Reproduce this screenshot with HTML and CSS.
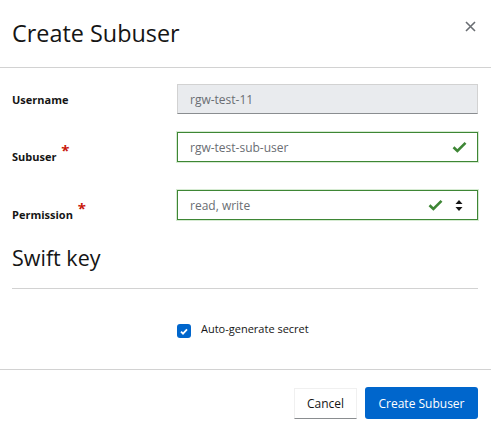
FILE: index.html
```html
<!DOCTYPE html>
<html>
<head>
<meta charset="utf-8">
<link rel="stylesheet" href="styles.css">
</head>
<body>
<div class="modal">
  <div class="modal-header">
    <h1 class="title">Create Subuser</h1>
    <button class="close" aria-label="Close">
      <svg width="11" height="11" viewBox="0 0 11 11"><path d="M1 1L10 10M10 1L1 10" stroke="#6a6e73" stroke-width="1.6"/></svg>
    </button>
  </div>
  <div class="modal-body">
    <div class="row row-user">
      <label class="label">Username</label>
      <div class="input disabled">rgw-test-11</div>
    </div>
    <div class="row row-sub">
      <label class="label">Subuser <span class="req">*</span></label>
      <div class="input valid"><span class="val">rgw-test-sub-user</span>
        <svg class="check" width="15" height="12" viewBox="0 0 15 12"><path d="M1.5 6.2L5.4 10L13.5 1.8" fill="none" stroke="#3e8635" stroke-width="2.6"/></svg>
      </div>
    </div>
    <div class="row row-perm">
      <label class="label">Permission <span class="req">*</span></label>
      <div class="input valid"><span class="val">read, write</span>
        <svg class="check" width="15" height="12" viewBox="0 0 15 12"><path d="M1.5 6.2L5.4 10L13.5 1.8" fill="none" stroke="#3e8635" stroke-width="2.6"/></svg>
        <svg class="caret" width="8" height="11" viewBox="0 0 8 11"><path d="M4 0L7.5 4H0.5Z M4 11L7.5 7H0.5Z" fill="#151515"/></svg>
      </div>
    </div>
    <h2 class="section">Swift key</h2>
    <div class="check-row">
      <span class="checkbox"><svg width="8" height="7" viewBox="0 0 8 7"><path d="M1 3.6L3 5.6L7 1.4" fill="none" stroke="#fff" stroke-width="1.8"/></svg></span>
      <span class="check-label">Auto-generate secret</span>
    </div>
  </div>
  <div class="modal-footer">
    <button class="btn btn-secondary">Cancel</button>
    <button class="btn btn-primary">Create Subuser</button>
  </div>
</div>
</body>
</html>
```
FILE: styles.css
```css
* { box-sizing: border-box; }
html, body { margin: 0; padding: 0; background: #fff; }
body { font-family: "Open Sans", "Noto Sans", sans-serif; color: #151515; }
.modal { width: 491px; height: 433px; display: flex; flex-direction: column; }
.modal-header {
  display: flex; justify-content: space-between; align-items: flex-start;
  padding: 18px 12px 0 12px; height: 68px; flex: none; border-bottom: 1px solid #d2d2d2;
}
.title { margin: 0; font-weight: 400; font-size: 23.4px; line-height: 30px; color: #151515; }
.close { background: none; border: 0; padding: 0; margin: 3px 3px 0 0; width: 11px; height: 11px; }
.close svg { display: block; }
.modal-body { flex: 1; padding: 16px 13px 0 12px; }
.row { display: grid; grid-template-columns: 165px 301px; }
.label { font-size: 11px; font-weight: 700; color: #151515; }
.row-user { align-items: center; height: 30px; }
.row-sub { margin-top: 18px; height: 30px; }
.row-sub .label { padding-top: 13px; }
.row-perm { margin-top: 28px; height: 30px; }
.row-perm .label { padding-top: 13px; }
.req { color: #c9190b; font-size: 15px; position: relative; top: -5px; margin-left: 2px; }
.input {
  height: 30px; display: flex; align-items: center; padding: 0 12px;
  font-size: 12px; color: #151515;
}
.input.disabled { background: #e9ebee; border: 1px solid #d2d2d2; border-bottom-color: #8a8d90; color: #6a6e73; }
.input.valid { border: 1px solid #3e8635; box-shadow: 0 0 0 1px #d6ebd2; }
.val { flex: 1; color: #6a6e73; }
.check { margin-right: -2px; }
.caret { margin-left: 12px; margin-right: 2px; }
.row-perm .check { margin-right: 0; }
.section { margin: 24px 0 0 0; font-weight: 400; font-size: 21.5px; line-height: 28px; padding-bottom: 16px; border-bottom: 1px solid #d2d2d2; width: 466px; }
.check-row { display: flex; align-items: center; margin-top: 35px; padding-left: 165px; }
.checkbox { width: 14px; height: 14px; border-radius: 3px; background: #0066cc; display: flex; align-items: center; justify-content: center; }
.check-label { font-size: 11px; margin-left: 10px; margin-top: -6px; color: #151515; }
.modal-footer {
  flex: none; height: 64px;
  border-top: 1px solid #d2d2d2; display: flex; justify-content: flex-end; align-items: flex-start; gap: 8px; padding: 17px 13px 0 0;
}
.btn { font-family: inherit; font-size: 12px; height: 32px; padding: 0 12px; border-radius: 3px; cursor: pointer; }
.btn-secondary { background: #fff; color: #151515; border: 1px solid #f0f0f0; border-bottom: 1px solid #8a8d90; border-radius: 0; height: 31px; margin-top: 1px; width: 63px; }
.btn-primary { background: #0066cc; color: #fff; border: 0; width: 113px; }
```
